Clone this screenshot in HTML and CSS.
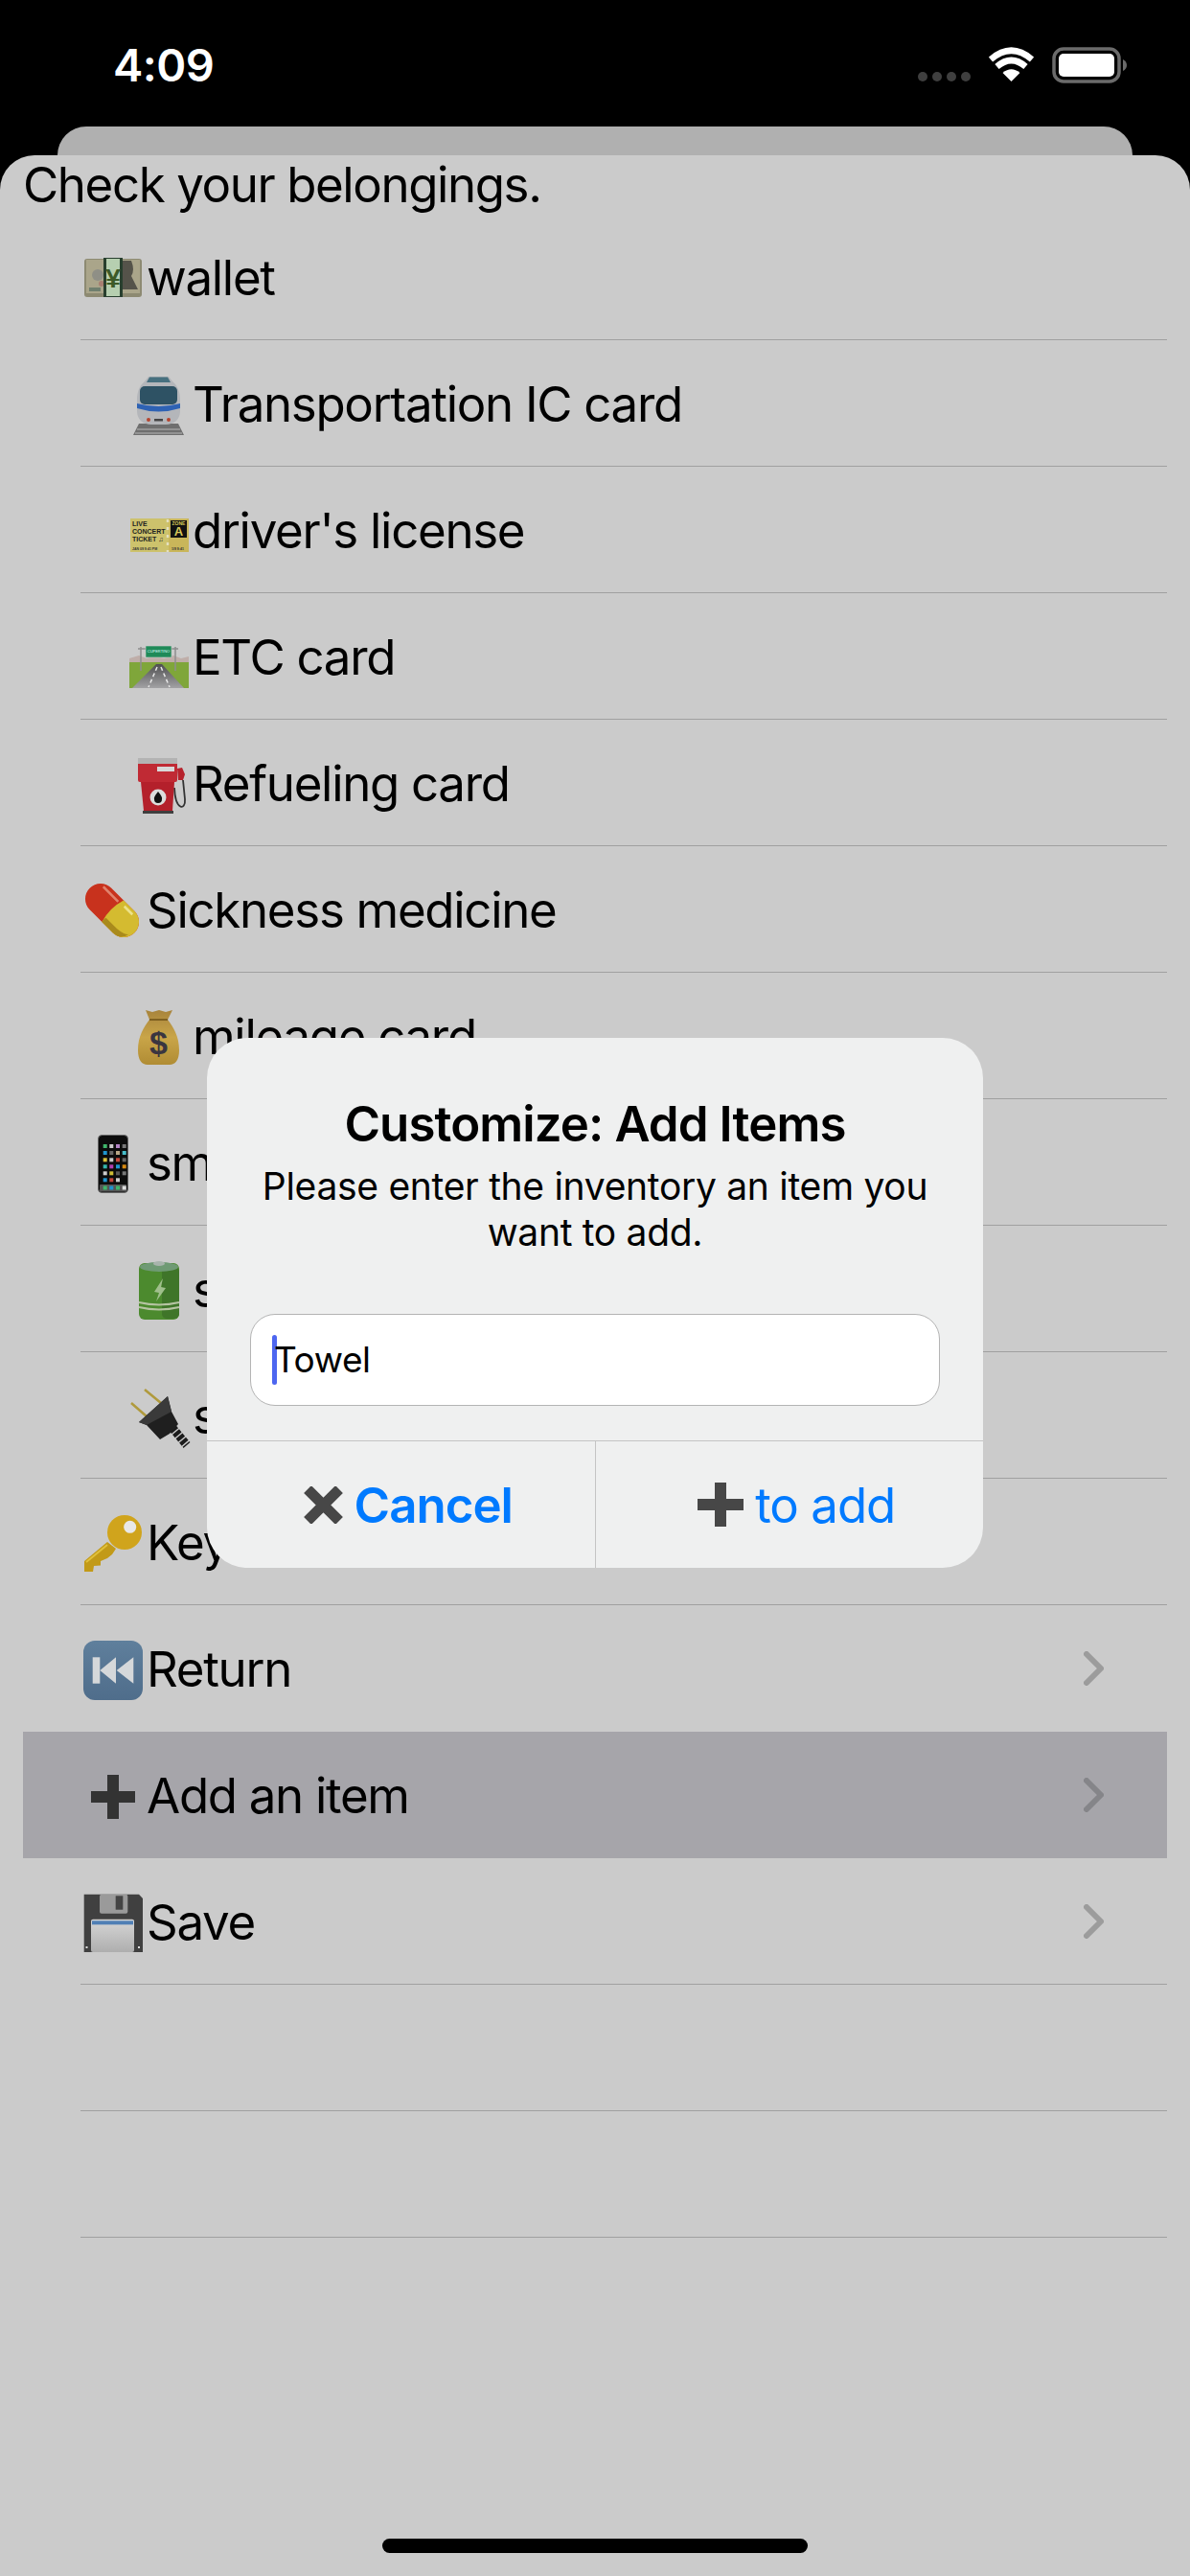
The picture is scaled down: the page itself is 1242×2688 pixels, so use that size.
FILE: index.html

```html
<!DOCTYPE html>
<html lang="en">
<head>
    <meta charset="UTF-8">
    <meta name="viewport" content="width=device-width, initial-scale=1.0">
    <title>Check your belongings</title>
    <link rel="stylesheet" href="styles.css">
</head>
<body>
    <div class="status-bar">
        <span class="time">4:09</span>
        <div class="status-icons">
            <div class="signal"><span></span><span></span><span></span><span></span></div>
            <svg class="wifi" viewBox="0 0 47 36">
                <path d="M23.5 36 14.5 27Q23.5 19.5 32.5 27Z" fill="#fff"/>
                <path d="M8.5 20.5Q23.5 7.500 38.500 20.500" fill="none" stroke="#fff" stroke-width="6.500"/>
                <path d="M2 13Q23.500-5.500 45 13" fill="none" stroke="#fff" stroke-width="6.500"/>
            </svg>
            <svg class="battery" viewBox="0 0 79 38">
                <rect x="2" y="2" width="68" height="34" rx="10" fill="none" stroke="#6b6b6b" stroke-width="3.500"/>
                <rect x="7" y="7" width="58" height="24" rx="5" fill="#fff"/>
                <path d="M74 13Q78 15 78 19T74 25Z" fill="#6b6b6b"/>
            </svg>
        </div>
    </div>

    <div class="back-card"></div>

    <div class="sheet">
        <div class="sheet-title">Check your belongings.</div>

        <div class="row">
            <div class="row-body">
                <svg class="emoji" viewBox="0 0 66 66">
                    <rect x="3" y="12" width="60" height="40" rx="3" fill="#8d8a72"/>
                    <rect x="5" y="13" width="56" height="35" fill="#aaa58a"/>
                    <circle cx="17" cy="29" r="6" fill="#8f8f86"/>
                    <circle cx="21" cy="38" r="3" fill="#a77f72"/>
                    <rect x="8" y="42" width="12" height="4" fill="#6f7f6e"/>
                    <path d="M41 14H52Q56 24 52 30L59 44H41Z" fill="#55534a"/>
                    <rect x="23" y="11" width="20" height="41" fill="#283f2e"/>
                    <rect x="26" y="12" width="14" height="39" fill="#b6cfb0"/>
                    <text class="glyph-yen" x="33" y="42">¥</text>
                </svg>
                <span>wallet</span>
            </div>
        </div>

        <div class="row row-sub">
            <div class="row-body">
                <svg class="emoji" viewBox="0 0 66 66">
                    <path d="M6 64 12 52H53L59 64Z" fill="#6f6f6f"/>
                    <path d="M10 58H55M8 62H57" stroke="#a0a0a0" stroke-width="1.500"/>
                    <path d="M22 3H43L47 8C53 13 55 20 55 27V39C55 48 48 53 40 53H25C17 53 10 48 10 39V27C10 20 12 13 18 8Z" fill="#b4b6ba"/>
                    <path d="M23 3.500H42L45 9H20Z" fill="#47707f"/>
                    <rect x="13" y="13" width="39" height="19" rx="5" fill="#2e5264"/>
                    <path d="M10 31Q32.500 37 55 31V36Q32.500 43 10 36Z" fill="#2e62b4"/>
                    <circle cx="22" cy="48" r="2" fill="#b5452f"/>
                    <circle cx="43" cy="48" r="2" fill="#b5452f"/>
                    <rect x="28" y="47" width="9" height="2.500" fill="#444"/>
                </svg>
                <span>Transportation IC card</span>
            </div>
        </div>

        <div class="row row-sub">
            <div class="row-body">
                <svg class="emoji" viewBox="0 0 66 66">
                    <rect x="3" y="19" width="61" height="35" fill="#cdc26c"/>
                    <rect x="43" y="19" width="21" height="35" fill="#c9b65a"/>
                    <path d="M42 20V54" stroke="#e4e0c0" stroke-width="2.500" stroke-dasharray="3 5"/>
                    <rect x="45" y="21" width="17" height="18" fill="#111"/>
                    <text class="ticket-zone" x="53.500" y="26">ZONE</text>
                    <text class="ticket-a" x="53.500" y="37">A</text>
                    <text class="ticket-line" x="5" y="27">LIVE</text>
                    <text class="ticket-line" x="5" y="35">CONCERT</text>
                    <text class="ticket-line" x="5" y="43">TICKET ♫</text>
                    <text class="ticket-small" x="5" y="52">JAN 09 9:41 PM</text>
                    <text class="ticket-small" x="46" y="52">1/9 9:41</text>
                </svg>
                <span>driver's license</span>
            </div>
        </div>

        <div class="row row-sub">
            <div class="row-body">
                <svg class="emoji" viewBox="0 0 66 66">
                    <defs>
                        <linearGradient id="road-top" x1="0" y1="0" x2="0" y2="1">
                            <stop offset="0" stop-color="#4f4f51"/>
                            <stop offset="1" stop-color="#a2a2a4"/>
                        </linearGradient>
                    </defs>
                    <path d="M2 33 12 30 20 33 28 30 38 33 48 30 56 33 64 31V38H2Z" fill="#bfaea9"/>
                    <rect x="2" y="37" width="62" height="27" fill="#7fa63a"/>
                    <path d="M5 64 30 39H36L59 64Z" fill="url(#road-top)"/>
                    <path d="M31 42 22 63M35 42 44 63" stroke="#e8e8e8" stroke-width="1.500" stroke-dasharray="4 3"/>
                    <path d="M14 21V46M50 21V46M11 23H53" stroke="#8f8f8f" stroke-width="1.500" fill="none"/>
                    <rect x="19" y="20" width="27" height="12" fill="#1f8a58" stroke="#ccc" stroke-width=".6"/>
                    <text class="road-sign" x="32.500" y="26.500">CUPERTINO</text>
                </svg>
                <span>ETC card</span>
            </div>
        </div>

        <div class="row row-sub">
            <div class="row-body">
                <svg class="emoji" viewBox="0 0 66 66">
                    <path d="M49 36C50 60 61 60 60 48L58 28" stroke="#333" stroke-width="1.800" fill="none"/>
                    <path d="M52 16 57 15 60 22 58 28H53Z" fill="#b6222c"/>
                    <path d="M14 30H49L47 60H17Z" fill="#b4202b"/>
                    <rect x="16" y="60" width="32" height="3" fill="#3f3f3f"/>
                    <rect x="11" y="5" width="41" height="25" rx="2" fill="#c02a34"/>
                    <rect x="11" y="5" width="41" height="6" fill="#b3b3b3"/>
                    <rect x="31" y="14" width="18" height="5" fill="#d8d8d8"/>
                    <circle cx="32" cy="46" r="8.500" fill="#dcdcdc"/>
                    <path d="M32 40Q37 46 36 48A4 4 0 0 1 28 48Q27 46 32 40Z" fill="#111"/>
                </svg>
                <span>Refueling card</span>
            </div>
        </div>

        <div class="row">
            <div class="row-body">
                <svg class="emoji" viewBox="0 0 66 66">
                    <g transform="rotate(45 32 32)">
                        <rect x="-1" y="16" width="66" height="32" rx="16" fill="#c8321d"/>
                        <path d="M33 16H49A16 16 0 0 1 49 48H33Q28 32 33 16Z" fill="#d4bb30"/>
                        <path d="M33 42H49A16 6 0 0 0 62 37Q60 48 49 48H33Q32 45 33 42Z" fill="#a98a1c"/>
                        <path d="M8 21H30" stroke="#e0836e" stroke-width="2.500"/>
                        <path d="M38 20H50" stroke="#ece28a" stroke-width="2.500"/>
                    </g>
                </svg>
                <span>Sickness medicine</span>
            </div>
        </div>

        <div class="row row-sub">
            <div class="row-body">
                <svg class="emoji" viewBox="0 0 66 66">
                    <defs>
                        <linearGradient id="bag-fill" x1="0" y1="0" x2="0" y2="1">
                            <stop offset="0" stop-color="#a8843c"/>
                            <stop offset=".5" stop-color="#c9a548"/>
                            <stop offset="1" stop-color="#b08c34"/>
                        </linearGradient>
                    </defs>
                    <path d="M19 4 26 6 33 4 40 6 47 4 42 14C48 22 54 31 54 46 54 56 50 61 44 61H21C15 61 11 56 11 46 11 31 17 22 23 14Z" fill="url(#bag-fill)"/>
                    <path d="M23 14H42" stroke="#7f6020" stroke-width="2"/>
                    <text class="glyph-dollar" x="32.500" y="50">$</text>
                </svg>
                <span>mileage card</span>
            </div>
        </div>

        <div class="row">
            <div class="row-body">
                <svg class="emoji" viewBox="0 0 66 66">
                    <rect x="17.500" y="2.500" width="31" height="60" rx="4" fill="#0c0c0c" stroke="#666"/>
                    <rect x="22.700" y="12" width="4" height="4" fill="#3fb56a"/><rect x="29.300" y="12" width="4" height="4" fill="#ccc"/><rect x="36" y="12" width="4" height="4" fill="#b283c4"/><rect x="42.700" y="12" width="4" height="4" fill="#777"/>
                    <rect x="22.700" y="19" width="4" height="4" fill="#1f94cf"/><rect x="29.300" y="19" width="4" height="4" fill="#666"/><rect x="36" y="19" width="4" height="4" fill="#b7a585"/><rect x="42.700" y="19" width="4" height="4" fill="#46bcc9"/>
                    <rect x="22.700" y="26.300" width="4" height="4" fill="#d9c13a"/><rect x="29.300" y="26.300" width="4" height="4" fill="#ccc"/><rect x="36" y="26.300" width="4" height="4" fill="#c5473a"/><rect x="42.700" y="26.300" width="4" height="4" fill="#666"/>
                    <rect x="22.700" y="33.300" width="4" height="4" fill="#35b5ad"/><rect x="29.300" y="33.300" width="4" height="4" fill="#b23fb0"/><rect x="36" y="33.300" width="4" height="4" fill="#1f94cf"/><rect x="42.700" y="33.300" width="4" height="4" fill="#d88a12"/>
                    <rect x="22.700" y="40.300" width="4" height="4" fill="#ccc"/><rect x="29.300" y="40.300" width="4" height="4" fill="#cfbd35"/><rect x="36" y="40.300" width="4" height="4" fill="#555"/><rect x="42.700" y="40.300" width="4" height="4" fill="#777"/>
                    <rect x="22.700" y="47.300" width="4" height="4" fill="#1f94cf"/><rect x="29.300" y="47.300" width="4" height="4" fill="#c5473a"/><rect x="36" y="47.300" width="4" height="4" fill="#ccc"/>
                    <rect x="19" y="54" width="28" height="7.500" rx="1" fill="#555"/>
                    <rect x="22.700" y="55.500" width="4" height="4" fill="#3fb56a"/><rect x="29.300" y="55.500" width="4" height="4" fill="#1f94cf"/><rect x="36" y="55.500" width="4" height="4" fill="#3fb56a"/><rect x="42.700" y="55.500" width="4" height="4" fill="#ddd"/>
                </svg>
                <span>smartphone</span>
            </div>
        </div>

        <div class="row row-sub">
            <div class="row-body">
                <svg class="emoji" viewBox="0 0 66 66">
                    <rect x="12" y="4" width="42" height="59" rx="6" fill="#4c8a2e"/>
                    <rect x="36" y="8" width="18" height="54" rx="5" fill="#3f7529"/>
                    <ellipse cx="33" cy="8" rx="20" ry="5" fill="#6f9a74"/>
                    <ellipse cx="33" cy="4.500" rx="6" ry="2.500" fill="#a8b4ac"/>
                    <path d="M37 20 28 34 33 35 30 44 40 30 35 29Z" fill="#a0bf8c"/>
                    <path d="M12 45Q33 50 54 45M12 50Q33 55 54 50" stroke="#b6c4a2" stroke-width="1.800" fill="none"/>
                </svg>
                <span>spare battery</span>
            </div>
        </div>

        <div class="row row-sub">
            <div class="row-body">
                <svg class="emoji" viewBox="0 0 66 66">
                    <path d="M4 18 20 32M18 4 35 18" stroke="#b09a3c" stroke-width="2.500"/>
                    <path d="M47 44 62 62" stroke="#1c1c1c" stroke-width="9" stroke-dasharray="4 1.500"/>
                    <path d="M42 11 12 38 20 41 34 56 44 50 53 40 46 27Z" fill="#1f1f1f"/>
                    <path d="M42 11 12 38 20 41 46 27Z" fill="#3a3a3a"/>
                </svg>
                <span>spare charger</span>
            </div>
        </div>

        <div class="row">
            <div class="row-body">
                <svg class="emoji" viewBox="0 0 66 66">
                    <path d="M27 31 3 51V62H12L13 56 20 55.500V51L27 48 32 44 36 38Z" fill="#c29a18"/>
                    <path d="M27 34 5 52" stroke="#e0c03c" stroke-width="2"/>
                    <circle cx="45" cy="21" r="18" fill="#d0a41c"/>
                    <circle cx="50.700" cy="15.300" r="6.500" fill="#e8e8e8"/>
                </svg>
                <span>Key</span>
            </div>
        </div>

        <div class="row no-line">
            <div class="row-body">
                <svg class="emoji" viewBox="0 0 66 66">
                    <defs>
                        <linearGradient id="return-bg" x1="0" y1="0" x2="0" y2="1">
                            <stop offset="0" stop-color="#5f7f9c"/>
                            <stop offset="1" stop-color="#4f6d8b"/>
                        </linearGradient>
                    </defs>
                    <rect x="2" y="2" width="62" height="62" rx="12" fill="url(#return-bg)"/>
                    <rect x="11.700" y="19.300" width="7.600" height="27.400" fill="#d5d8da"/>
                    <path d="M36 19.300 19.300 33 36 46.700ZM54.300 19.300 36.700 33 54.300 46.700Z" fill="#d5d8da"/>
                </svg>
                <span>Return</span>
                <svg class="chevron" viewBox="0 0 21 36"><path d="M3 3 18 18 3 33"/></svg>
            </div>
        </div>

        <div class="row row-selected no-line">
            <div class="row-body">
                <svg class="emoji" viewBox="0 0 66 66">
                    <path d="M27 10H39V27H56V39H39V56H27V39H10V27H27Z" fill="#333"/>
                </svg>
                <span>Add an item</span>
                <svg class="chevron" viewBox="0 0 21 36"><path d="M3 3 18 18 3 33"/></svg>
            </div>
        </div>

        <div class="row">
            <div class="row-body">
                <svg class="emoji" viewBox="0 0 66 66">
                    <defs>
                        <linearGradient id="floppy-label" x1="0" y1="0" x2="0" y2="1">
                            <stop offset="0" stop-color="#d6d6d6"/>
                            <stop offset="1" stop-color="#aeaeae"/>
                        </linearGradient>
                    </defs>
                    <path d="M2.700 2.700H60L64 7V63H2.700Z" fill="#404040"/>
                    <rect x="19" y="2.700" width="29.300" height="20" rx="2" fill="#9a9a9a"/>
                    <rect x="35.700" y="4.300" width="7.600" height="14.400" fill="#444"/>
                    <rect x="10" y="28.700" width="45" height="34.300" rx="2" fill="url(#floppy-label)"/>
                    <rect x="11" y="30.300" width="43" height="4" fill="#4f7fb5"/>
                    <rect x="4.500" y="57" width="2" height="2" fill="#ddd"/>
                    <rect x="59" y="57" width="2" height="2" fill="#ddd"/>
                </svg>
                <span>Save</span>
                <svg class="chevron" viewBox="0 0 21 36"><path d="M3 3 18 18 3 33"/></svg>
            </div>
        </div>

        <div class="row"><div class="row-body"></div></div>
        <div class="row"><div class="row-body"></div></div>
    </div>

    <div class="dialog">
        <div class="dialog-content">
            <h2>Customize: Add Items</h2>
            <p>Please enter the inventory an item you want to add.</p>
            <div class="text-field"><span class="caret"></span><span>Towel</span></div>
        </div>
        <div class="dialog-buttons">
            <div class="dialog-button bold">
                <svg class="icon-x" viewBox="0 0 41 39"><path d="M4 3 37 36M37 3 4 36"/></svg>
                <span>Cancel</span>
            </div>
            <div class="dialog-button">
                <svg class="icon-plus" viewBox="0 0 48 46"><path d="M18 0H30V17H48V29H30V46H18V29H0V17H18Z"/></svg>
                <span>to add</span>
            </div>
        </div>
    </div>

    <div class="home-indicator"></div>
</body>
</html>
```

FILE: styles.css

```css
* {
    box-sizing: border-box;
}

body {
    margin: 0;
    width: 1242px;
    height: 2688px;
    overflow: hidden;
    background-color: #000;
    font-family: Inter, "Liberation Sans", sans-serif;
    display: flex;
    flex-direction: column;
    position: relative;
}

/* status bar */
.status-bar {
    height: 132px;
    flex: none;
    display: flex;
    justify-content: space-between;
    padding: 49px 65px 0 118px;
}

.time {
    color: #fff;
    font-size: 47px;
    font-weight: 600;
    line-height: 37px;
    letter-spacing: -0.5px;
}

.status-icons {
    display: flex;
    align-items: flex-start;
}

.signal {
    display: flex;
    gap: 5px;
    margin-top: 26px;
    margin-right: 19px;
}

.signal span {
    width: 10px;
    height: 10px;
    border-radius: 50%;
    background-color: #3f3f3f;
}

.wifi {
    width: 47px;
    height: 36px;
    margin-right: 19px;
}

.battery {
    width: 79px;
    height: 38px;
}

.back-card {
    flex: none;
    height: 30px;
    margin: 0 60px;
    background-color: #b0b0b0;
    border-radius: 30px 30px 0 0;
}

/* list */
.sheet {
    flex: 1;
    background-color: #cbcbcb;
    border-radius: 36px 36px 0 0;
    padding: 0 24px;
}

.sheet-title {
    height: 61px;
    font-size: 51px;
    line-height: 62px;
    color: #000;
    letter-spacing: -1.4px;
}

.row {
    height: 132px;
    padding-left: 60px;
    font-size: 51px;
    color: #000;
    letter-spacing: -1.3px;
}

.row-body {
    height: 100%;
    display: flex;
    align-items: center;
    border-bottom: 1px solid #a0a0a0;
    padding-right: 66px;
}

.row-body span {
    margin-top: 1px;
}

.emoji {
    width: 66px;
    height: 66px;
    flex: none;
    margin-top: 4px;
    margin-left: 1px;
    margin-right: 2px;
}

.row-sub .row-body {
    padding-left: 48px;
}

.row-selected {
    background-color: #a6a5aa;
}

.no-line .row-body {
    border-bottom: none;
}

.chevron {
    width: 21px;
    height: 36px;
    margin-left: auto;
    fill: none;
    stroke: #9c9c9c;
    stroke-width: 6;
    stroke-linecap: round;
    stroke-linejoin: round;
}

.row-selected .chevron {
    stroke: #858589;
}

/* small text inside the emoji */
.glyph-yen {
    font-family: "Liberation Sans", sans-serif;
    font-size: 28px;
    font-weight: 700;
    fill: #3d5a28;
    text-anchor: middle;
    letter-spacing: 0;
}

.glyph-dollar {
    font-family: "Liberation Sans", sans-serif;
    font-size: 34px;
    font-weight: 700;
    fill: #3a3540;
    text-anchor: middle;
    letter-spacing: 0;
}

.ticket-line {
    font-family: "Liberation Sans", sans-serif;
    font-size: 7px;
    font-weight: 700;
    fill: #222;
    letter-spacing: 0;
}

.ticket-small {
    font-family: "Liberation Sans", sans-serif;
    font-size: 3.500px;
    font-weight: 700;
    fill: #333;
    letter-spacing: 0;
}

.ticket-zone {
    font-family: "Liberation Sans", sans-serif;
    font-size: 5px;
    font-weight: 700;
    fill: #d8c95a;
    text-anchor: middle;
    letter-spacing: 0;
}

.ticket-a {
    font-family: "Liberation Sans", sans-serif;
    font-size: 13px;
    font-weight: 700;
    fill: #d8c95a;
    text-anchor: middle;
    letter-spacing: 0;
}

.road-sign {
    font-family: "Liberation Sans", sans-serif;
    font-size: 4px;
    fill: #dff;
    text-anchor: middle;
    letter-spacing: 0;
}

/* dialog */
.dialog {
    position: absolute;
    top: 1083px;
    left: 216px;
    width: 810px;
    height: 553px;
    background-color: #eff0f0;
    border-radius: 42px;
    display: flex;
    flex-direction: column;
}

.dialog-content {
    flex: 1;
    padding: 60px 45px 0;
    text-align: center;
}

.dialog h2 {
    margin: 0;
    font-size: 51px;
    line-height: 60px;
    font-weight: 600;
    color: #000;
    letter-spacing: -0.9px;
}

.dialog p {
    margin: 11px 0 61px;
    font-size: 39px;
    line-height: 48px;
    color: #000;
    letter-spacing: -0.3px;
}

.text-field {
    height: 96px;
    display: flex;
    align-items: center;
    padding-left: 22px;
    background-color: #fff;
    border: 1px solid #b4b4b4;
    border-radius: 26px;
    font-size: 37px;
    color: #000;
    letter-spacing: -0.4px;
}

.caret {
    width: 5px;
    height: 52px;
    margin-right: -3px;
    border-radius: 3px;
    background-color: #4d66f0;
}

.text-field span + span {
    margin-top: -1px;
}

.dialog-buttons {
    flex: none;
    height: 133px;
    display: flex;
    border-top: 1px solid #c4c4c4;
}

.dialog-button {
    flex: 1;
    display: flex;
    align-items: center;
    justify-content: center;
    gap: 12px;
    padding-left: 15px;
    font-size: 51px;
    color: #007aff;
    letter-spacing: -1px;
}

.dialog-button + .dialog-button {
    border-left: 1px solid #c4c4c4;
}

.dialog-button.bold {
    font-weight: 600;
}

.icon-x {
    width: 41px;
    height: 39px;
    fill: none;
    stroke: #474747;
    stroke-width: 11;
}

.icon-plus {
    width: 48px;
    height: 46px;
    fill: #474747;
}

.home-indicator {
    position: absolute;
    left: 399px;
    top: 2649px;
    width: 444px;
    height: 15px;
    border-radius: 8px;
    background-color: #000;
}
```
